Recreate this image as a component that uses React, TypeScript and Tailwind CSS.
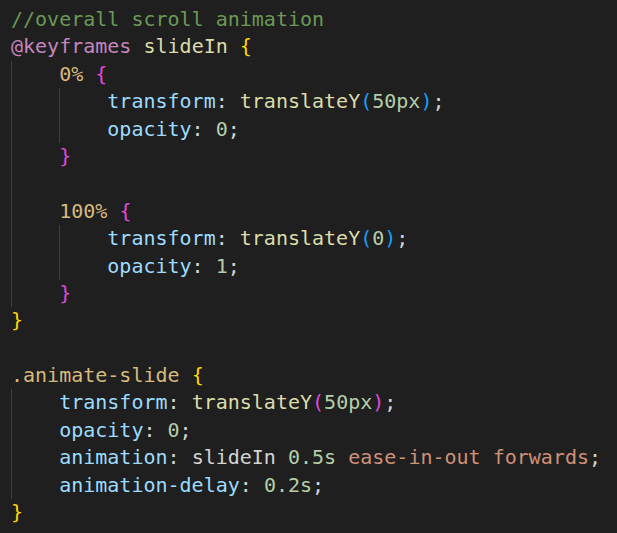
import React from "react";

type Tok = [string, string];
type Line = { guides: boolean[]; toks: Tok[] };

const C = {
  comment: "text-[#6a9955]",
  at: "text-[#c586c0]",
  fn: "text-[#dcdcaa]",
  plain: "text-[#d4d4d4]",
  b1: "text-[#ffd700]",
  b2: "text-[#e048dc]",
  b3: "text-[#179fff]",
  sel: "text-[#d7ba7d]",
  prop: "text-[#9cdcfe]",
  num: "text-[#b5cea8]",
  str: "text-[#ce9178]",
};

const lines: Line[] = [
  { guides: [], toks: [["//overall scroll animation", C.comment]] },
  { guides: [], toks: [["@keyframes", C.at], [" ", C.plain], ["slideIn", C.fn], [" ", C.plain], ["{", C.b1]] },
  { guides: [true], toks: [["0%", C.sel], [" ", C.plain], ["{", C.b2]] },
  { guides: [true, true], toks: [["transform", C.prop], [": ", C.plain], ["translateY", C.fn], ["(", C.b3], ["50px", C.num], [")", C.b3], [";", C.plain]] },
  { guides: [true, true], toks: [["opacity", C.prop], [": ", C.plain], ["0", C.num], [";", C.plain]] },
  { guides: [true], toks: [["}", C.b2]] },
  { guides: [true], toks: [] },
  { guides: [true], toks: [["100%", C.sel], [" ", C.plain], ["{", C.b2]] },
  { guides: [true, true], toks: [["transform", C.prop], [": ", C.plain], ["translateY", C.fn], ["(", C.b3], ["0", C.num], [")", C.b3], [";", C.plain]] },
  { guides: [true, true], toks: [["opacity", C.prop], [": ", C.plain], ["1", C.num], [";", C.plain]] },
  { guides: [true], toks: [["}", C.b2]] },
  { guides: [], toks: [["}", C.b1]] },
  { guides: [], toks: [] },
  { guides: [], toks: [[".animate-slide", C.sel], [" ", C.plain], ["{", C.b1]] },
  { guides: [true], toks: [["transform", C.prop], [": ", C.plain], ["translateY", C.fn], ["(", C.b2], ["50px", C.num], [")", C.b2], [";", C.plain]] },
  { guides: [true], toks: [["opacity", C.prop], [": ", C.plain], ["0", C.num], [";", C.plain]] },
  { guides: [true], toks: [["animation", C.prop], [": ", C.plain], ["slideIn", C.plain], [" ", C.plain], ["0.5s", C.num], [" ", C.plain], ["ease-in-out", C.str], [" ", C.plain], ["forwards", C.str], [";", C.plain]] },
  { guides: [true], toks: [["animation-delay", C.prop], [": ", C.plain], ["0.2s", C.num], [";", C.plain]] },
  { guides: [], toks: [["}", C.b1]] },
];

export default function App() {
  return (
    <div
      className="w-[617px] h-[533px] overflow-hidden bg-[#1f1f1f] pl-[11px] pt-[6px] text-[20px] leading-[27.4px]"
      style={{ fontFamily: '"DejaVu Sans Mono", monospace' }}
    >
      {lines.map((ln, i) => (
        <div key={i} className="flex h-[27.4px] whitespace-pre">
          {ln.guides.map((g, j) => (
            <span
              key={j}
              className={`inline-block w-[4ch] h-[27.4px] shrink-0 ${g ? "border-l border-[#404040]" : ""}`}
            />
          ))}
          {ln.toks.map(([t, c], k) => (
            <span key={k} className={c}>
              {t}
            </span>
          ))}
        </div>
      ))}
    </div>
  );
}
